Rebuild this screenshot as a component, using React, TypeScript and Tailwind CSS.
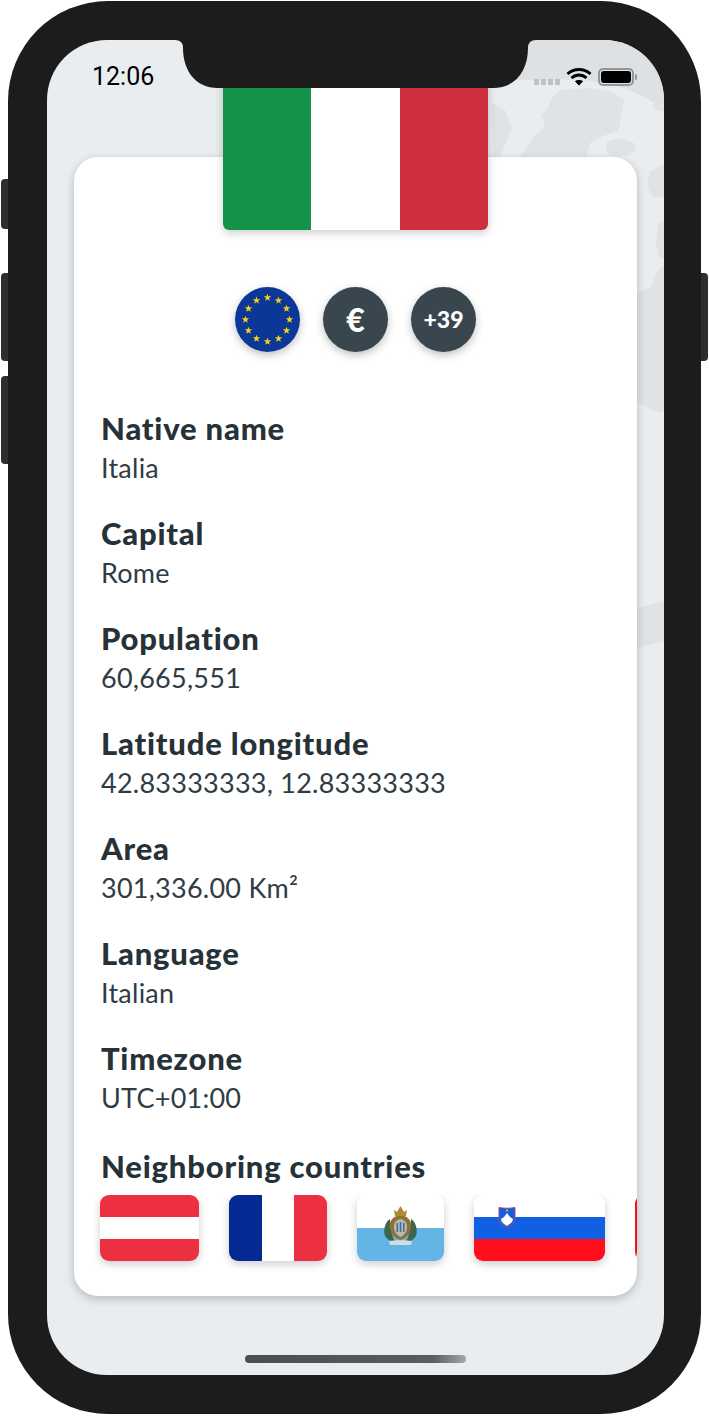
const details = [
  { label: "Native name", value: "Italia" },
  { label: "Capital", value: "Rome" },
  { label: "Population", value: "60,665,551" },
  { label: "Latitude longitude", value: "42.83333333, 12.83333333" },
  { label: "Area", value: "301,336.00 Km²" },
  { label: "Language", value: "Italian" },
  { label: "Timezone", value: "UTC+01:00" },
];

// map shapes behind the card, in page coordinates
function WorldMap() {
  return (
    <svg className="absolute inset-0" width="617" height="1335" viewBox="47 40 617 1335">
      <path d="M500 40H664V110C645 94 620 84 580 80C550 78 525 80 500 82Z" fill="#dde1e4" />
      <g fill="#dfe3e6">
        <path d="M491 102L505 110L512 128L500 157H520L536 134L545 127L541 115L548 108L552 98L560 90L590 88L612 92L624 100L621 118L618 131L600 137L590 143L586 157H538L520 157H494Z" />
        <path d="M606 142L620 138L634 143L636 150L628 156H612L606 150Z" />
        <path d="M652 104L664 103V112L655 110Z" />
        <path d="M650 171L663 165H664V197L653 198L647 186Z" />
        <path d="M658 224L664 220V259L659 256L656 244Z" />
        <path d="M637 294L652 286L656 273L664 265V410L660 413L650 409L637 401Z" />
        <path d="M637 608L664 601V641L637 648Z" />
      </g>
    </svg>
  );
}

function StatusIcons() {
  return (
    <div className="flex items-center">
      <div className="flex gap-[2px] mt-[11px] mr-[6px]">
        <div className="w-[5px] h-[6px] bg-[#bcc1c5]" />
        <div className="w-[5px] h-[6px] bg-[#bcc1c5]" />
        <div className="w-[5px] h-[6px] bg-[#bcc1c5]" />
        <div className="w-[5px] h-[6px] bg-[#bcc1c5]" />
      </div>
      <svg width="26" height="19" viewBox="0 0 26 19" fill="none" stroke="#000" strokeWidth="3">
        <path d="M1.5 7C8 1 18 1 24.5 7" />
        <path d="M5.5 11C10 7 16 7 20.5 11" />
        <path d="M13 18.500L8.800 14.300C11 12.400 15 12.400 17.200 14.300Z" fill="#000" stroke="none" />
      </svg>
      <div className="ml-[6px] w-[36px] h-[18px] rounded-[5px] border-2 border-[#92979b] p-[1px]">
        <div className="w-full h-full rounded-[3px] bg-black" />
      </div>
      <div className="w-[2px] h-[6px] ml-px rounded-r-sm bg-[#92979b]" />
    </div>
  );
}

function EuFlag() {
  const stars = Array.from({ length: 12 }, (_, i) => {
    const a = (i * Math.PI) / 6;
    return { x: 32.5 + 22 * Math.sin(a), y: 32.5 - 22 * Math.cos(a) };
  });
  return (
    <svg width="65" height="65" viewBox="0 0 65 65">
      <circle cx="32.5" cy="32.5" r="32.5" fill="#0b3796" />
      {stars.map((s, i) => (
        <path
          key={i}
          transform={`translate(${s.x} ${s.y}) scale(1.1)`}
          d="M0-3.500L.9-1.100L3.400-1.100L1.400.5L2.100 3L0 1.500L-2.100 3L-1.400.5L-3.400-1.100L-.9-1.100Z"
          fill="#f7cf1d"
        />
      ))}
    </svg>
  );
}

function SanMarino() {
  return (
    <svg width="87" height="66" viewBox="0 0 87 66">
      <rect width="87" height="33" fill="#fff" />
      <rect y="33" width="87" height="33" fill="#62b5e5" />
      <path d="M33 24C28 27 26 35 28 41C31 45 34 47 38 47C35 41 33 32 33 24Z" fill="#3d6650" />
      <path d="M54 24C59 27 61 35 59 41C56 45 53 47 49 47C52 41 54 32 54 24Z" fill="#3d6650" />
      <path d="M43.500 20C50 21 55 25 54 31C54 38 50 43 43.500 45C37 43 33 38 33 31C32 25 37 21 43.500 20Z" fill="#94702c" />
      <path d="M43.500 24C47.500 25 50 27 50 32C50 37 47 40 43.500 42C40 40 37 37 37 32C37 27 39.500 25 43.500 24Z" fill="#a9bccb" />
      <path d="M39.500 28H41V37H39.500ZM42.700 27H44.300V37H42.700ZM46 28H47.500V37H46Z" fill="#566875" />
      <path d="M38 21L37 15L40 17L43.500 11L47 17L50 15L49 21Z" fill="#ac8a38" />
      <path d="M32 46C37 45 50 45 55 46L54 50H33Z" fill="#d6dcde" />
    </svg>
  );
}

function SloveniaCrest() {
  return (
    <svg className="absolute left-[24px] top-[11px]" width="18" height="22" viewBox="0 0 18 22">
      <path d="M1 1.500C6 2.500 12 2.500 17 1.500V13C17 17 13 20 9 21.500C5 20 1 17 1 13Z" fill="#1160e3" stroke="#b5466b" />
      <path d="M3 13L6 11L9 7L12 11L15 13C15 16 12 18 9 20C6 18 3 16 3 13Z" fill="#fff" />
      <circle cx="9" cy="4.500" r="1" fill="#f7cf1d" />
    </svg>
  );
}

export default function App() {
  return (
    <div className="relative w-[709px] h-[1416px] bg-white overflow-hidden font-['Lato',sans-serif]">
      {/* Side buttons */}
      <div className="absolute left-px top-[179px] w-[8px] h-[50px] rounded-l bg-[#2e2e2e]" />
      <div className="absolute left-px top-[273px] w-[8px] h-[88px] rounded-l bg-[#2e2e2e]" />
      <div className="absolute left-px top-[376px] w-[8px] h-[88px] rounded-l bg-[#2e2e2e]" />
      <div className="absolute right-px top-[273px] w-[8px] h-[88px] rounded-r bg-[#2e2e2e]" />

      {/* Phone frame */}
      <div className="relative ml-[8px] mt-px w-[693px] h-[1413px] rounded-[100px] bg-[#1c1c1c] pl-[39px] pt-[39px]">
        <div className="relative w-[617px] h-[1335px] rounded-[60px] overflow-hidden bg-[#e9edf0]">
          <WorldMap />

          {/* Card */}
          <div className="relative mt-[117px] ml-[27px] w-[563px] inline-block align-top rounded-[24px] bg-white shadow-[0_3px_10px_rgba(0,0,0,0.22)] pb-[35px]">
            <div className="flex justify-center -mt-[104px]">
              <div className="flex w-[265px] h-[177px] rounded-b-[6px] overflow-hidden shadow-[0_3px_10px_rgba(0,0,0,0.2)]">
                <div className="flex-1 bg-[#14924a]" />
                <div className="flex-1 bg-white" />
                <div className="flex-1 bg-[#cd2f3e]" />
              </div>
            </div>

            <div className="flex justify-center gap-[23px] mt-[57px]">
              <div className="w-[65px] h-[65px] rounded-full shadow-[0_3px_8px_rgba(0,0,0,0.25)]">
                <EuFlag />
              </div>
              <div className="w-[65px] h-[65px] rounded-full bg-[#3a464e] flex items-center justify-center text-white font-black text-[32px] shadow-[0_3px_8px_rgba(0,0,0,0.25)]">
                €
              </div>
              <div className="w-[65px] h-[65px] rounded-full bg-[#3a464e] flex items-center justify-center text-white font-black text-[23px] shadow-[0_3px_8px_rgba(0,0,0,0.25)]">
                +39
              </div>
            </div>

            <div className="mt-[57px] pl-[27px]">
              {details.map((d) => (
                <div key={d.label} className="mb-[26px]">
                  <div className="text-[31px] leading-[38px] font-black tracking-[0.8px] text-[#263238]">{d.label}</div>
                  <div className="mt-px text-[27px] leading-[40px] tracking-[0.25px] text-[#2f3c44]">{d.value}</div>
                </div>
              ))}
              <div className="mt-[29px] text-[31px] leading-[38px] font-black tracking-[0.8px] text-[#263238]">
                Neighboring countries
              </div>
            </div>

            {/* Neighbours */}
            <div className="flex gap-[30px] mt-[10px] pl-[26px] pb-[14px] -mb-[14px] overflow-hidden rounded-br-[24px]">
              <div className="shrink-0 w-[99px] h-[66px] rounded-[9px] overflow-hidden flex flex-col shadow-[0_3px_8px_rgba(0,0,0,0.2)]">
                <div className="flex-1 bg-[#ed2f42]" />
                <div className="flex-1 bg-white" />
                <div className="flex-1 bg-[#ed2f42]" />
              </div>
              <div className="shrink-0 w-[98px] h-[66px] rounded-[9px] overflow-hidden flex shadow-[0_3px_8px_rgba(0,0,0,0.2)]">
                <div className="flex-1 bg-[#052a94]" />
                <div className="flex-1 bg-white" />
                <div className="flex-1 bg-[#ed2f42]" />
              </div>
              <div className="shrink-0 w-[87px] h-[66px] rounded-[9px] overflow-hidden shadow-[0_3px_8px_rgba(0,0,0,0.2)]">
                <SanMarino />
              </div>
              <div className="relative shrink-0 w-[131px] h-[66px] rounded-[9px] overflow-hidden flex flex-col shadow-[0_3px_8px_rgba(0,0,0,0.2)]">
                <div className="flex-1 bg-white" />
                <div className="flex-1 bg-[#1160e3]" />
                <div className="flex-1 bg-[#ff0f1e]" />
                <SloveniaCrest />
              </div>
              <div className="shrink-0 w-[99px] h-[66px] rounded-[9px] bg-[#f0101e]" />
            </div>
          </div>

          {/* Status bar */}
          <div className="absolute left-[45px] top-[23px] font-['Roboto',sans-serif] font-normal text-[25px] leading-[28px] text-black">
            12:06
          </div>
          <div className="absolute left-[487px] top-[27px]">
            <StatusIcons />
          </div>

          {/* Notch */}
          <svg className="absolute left-[128px] top-0" width="361" height="48" viewBox="0 0 361 48">
            <path d="M0 0Q8 0 8 8C8 30 20 48 43 48H318C341 48 353 30 353 8Q353 0 361 0Z" fill="#1c1c1c" />
          </svg>

          {/* Home indicator */}
          <div className="absolute left-[198px] top-[1315px] w-[221px] h-[8px] rounded bg-gradient-to-r from-[#4d4d4d] via-[#5c5c5c] via-85% to-[#a8a8a8]" />
        </div>
      </div>
    </div>
  );
}
